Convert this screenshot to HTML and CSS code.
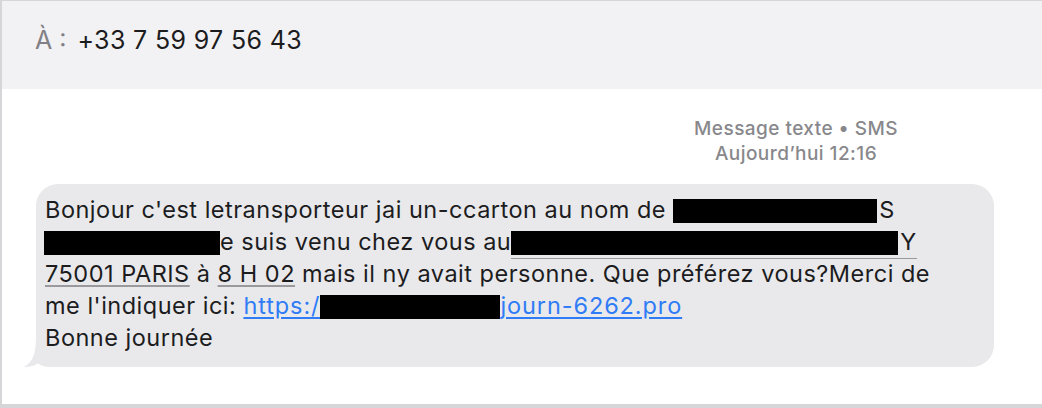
FILE: index.html
```html
<!DOCTYPE html>
<html lang="fr">
<head>
<meta charset="utf-8">
<link rel="stylesheet" href="styles.css">
</head>
<body>
<div class="window">
  <header class="to-bar">
    <span class="to-label">À :</span>
    <span class="to-number">+33 7 59 97 56 43</span>
  </header>
  <main class="thread">
    <div class="meta">
      <div>Message texte • SMS</div>
      <div>Aujourd’hui 12:16</div>
    </div>
    <div class="row">
      <div class="bubble">
        <svg class="tail" width="40" height="30" viewBox="0 0 40 30" aria-hidden="true"><path d="M12,0 C12,16 9,25 0,30 C5,30.4 10,29 14,26.5 C17,28.5 21,30 26,30 L40,30 L40,0 Z"/></svg>
        <p>Bonjour c'est letransporteur jai un-ccarton au nom de <span class="redact r1"></span>S<br><span class="redact r2"></span>e suis venu chez vous au<span class="addr"><span class="redact r3"></span>Y</span><br><span class="u">75001 PARIS</span> à <span class="u">8 H 02</span> mais il ny avait personne. Que préférez vous?Merci de<br>me l'indiquer ici: <a class="link">https:/<span class="redact r4"></span>journ-6262.pro</a><br>Bonne journée</p>
      </div>
    </div>
  </main>
</div>
</body>
</html>
```
FILE: styles.css
```css
* { box-sizing: border-box; }
html, body { margin: 0; padding: 0; background: #ffffff; }
body {
  width: 1042px;
  height: 408px;
  overflow: hidden;
  font-family: Inter, "Liberation Sans", Arial, sans-serif;
  color: #1c1c1e;
}
.window {
  height: 408px;
  border-left: 2px solid #d6d6d8;
  border-top: 1px solid #d6d6d8;
  border-bottom: 4px solid #d6d6d8;
  display: flex;
  flex-direction: column;
}
.to-bar {
  height: 88px;
  background: #f2f1f4;
  display: flex;
  align-items: center;
  padding: 0 0 10px 33px;
  font-size: 25px;
  gap: 11px;
}
.to-label { color: #808084; }
.to-number { color: #1c1c1e; letter-spacing: 0.35px; }
.thread {
  flex: 1;
  display: flex;
  flex-direction: column;
  padding-top: 27px;
}
.meta {
  align-self: flex-start;
  margin-left: 686px;
  width: 216px;
  text-align: center;
  color: #88888c;
  font-size: 19px;
  letter-spacing: 0.45px;
  font-weight: 500;
  line-height: 25px;
}
.row {
  display: flex;
  padding: 18px 0 0 34px;
}
.bubble {
  position: relative;
  background: #e9e9eb;
  border-radius: 22px;
  width: 958px;
  padding: 10px 10px 13px 9px;
}
.tail {
  position: absolute;
  left: -12px;
  bottom: 0;
  fill: #e9e9eb;
}
.bubble p {
  margin: 0;
  font-size: 23.5px;
  letter-spacing: 0.5px;
  line-height: 32px;
  color: #1c1c1e;
  position: relative;
}
.redact {
  display: inline-block;
  background: #000;
  height: 24px;
  vertical-align: -5px;
}
.r1 { width: 204px; margin-right: 2px; }
.r2 { width: 176px; margin-left: -1px; }
.r3 { width: 387px; margin-right: 2px; }
.r4 { width: 180px; }
.addr {
  border-bottom: 1px solid #9a9a9e;
  padding-bottom: 2px;
}
.u {
  text-decoration: underline;
  text-decoration-color: #9a9a9e;
  text-underline-offset: 3px;
}
.link {
  color: #2f7cf6;
  text-decoration: underline;
  text-underline-offset: 3px;
  letter-spacing: 0.9px;
}
```
